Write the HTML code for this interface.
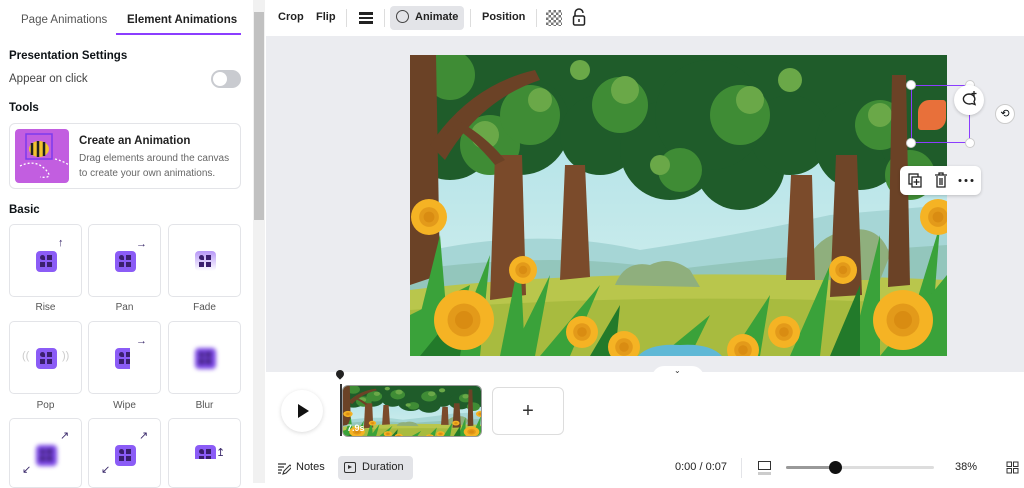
<!DOCTYPE html>
<html><head><meta charset="utf-8"><style>
*{box-sizing:border-box;margin:0;padding:0}
body{width:1024px;height:483px;overflow:hidden;font-family:"Liberation Sans",sans-serif;background:#fff;position:relative;color:#0d1216}
.a{position:absolute}
.tile{position:absolute;width:73px;height:73px;border:1px solid #e3e4e8;border-radius:5px;background:#fff;overflow:hidden}
.lab{position:absolute;width:73px;text-align:center;font-size:10px;color:#555}
.ic{position:absolute;left:26px;top:26px;width:21px;height:21px;background:#8b5cf6;border-radius:4px;overflow:hidden}
.ic::before{content:"";position:absolute;left:4px;top:4px;width:5px;height:5px;background:#3b1f6e;border-radius:50% 50% 0 50%}
.ic::after{content:"";position:absolute;left:4px;top:11px;width:5px;height:5px;background:#3b1f6e;box-shadow:7px 0 0 #3b1f6e,7px -7px 0 #3b1f6e}
.tb{font-size:11px;font-weight:bold;color:#222;position:absolute;top:11px}
</style></head><body>
<svg width="0" height="0" style="position:absolute">
<defs>
<linearGradient id="sky" x1="0" y1="0" x2="0" y2="1"><stop offset="0" stop-color="#a9dfe6"/><stop offset="1" stop-color="#d6f0ee"/></linearGradient>
<g id="fl"><circle r="1" fill="#f5b324"/><circle r=".55" fill="#e39a1a"/><circle r=".3" fill="#d98c12"/></g>
<symbol id="scene" viewBox="0 0 537 301" preserveAspectRatio="none">
<rect width="537" height="301" fill="url(#sky)"/>
<path d="M0 200 Q120 170 230 195 Q330 180 420 160 L537 150 L537 260 L0 260Z" fill="#a6d6d6"/>
<path d="M0 215 Q150 195 260 215 Q380 200 537 190 L537 260 L0 260Z" fill="#93c6bc"/>
<path d="M0 235 Q200 210 537 225 L537 301 L0 301Z" fill="#b9c64c"/>
<path d="M0 255 Q250 235 537 250 L537 301 L0 301Z" fill="#a8bb3f"/>
<path d="M205 230 Q215 205 240 210 Q260 200 280 215 L290 232Z" fill="#8faf7d"/>
<path d="M390 225 Q400 180 440 175 Q470 170 480 200 L470 225Z" fill="#8faf7d"/>
<g fill="#1f5c2a">
<rect x="0" y="0" width="537" height="70"/>
<circle cx="40" cy="80" r="45"/><circle cx="110" cy="70" r="50"/><circle cx="190" cy="80" r="40"/>
<circle cx="260" cy="95" r="50"/><circle cx="330" cy="110" r="45"/><circle cx="380" cy="80" r="40"/>
<circle cx="450" cy="90" r="45"/><circle cx="510" cy="85" r="40"/><circle cx="300" cy="60" r="55"/>
</g>
<g fill="#3f8c35">
<circle cx="80" cy="90" r="30"/><circle cx="120" cy="60" r="30"/><circle cx="210" cy="50" r="28"/>
<circle cx="330" cy="60" r="30"/><circle cx="270" cy="115" r="22"/><circle cx="470" cy="70" r="25"/>
<circle cx="500" cy="120" r="25"/><circle cx="40" cy="20" r="25"/>
</g>
<g fill="#6aa848">
<circle cx="75" cy="80" r="14"/><circle cx="130" cy="45" r="12"/><circle cx="215" cy="35" r="14"/>
<circle cx="340" cy="45" r="14"/><circle cx="250" cy="110" r="10"/><circle cx="470" cy="60" r="12"/>
<circle cx="380" cy="25" r="12"/><circle cx="170" cy="15" r="10"/>
</g>
<path d="M0 0 L26 0 L30 220 L0 230Z" fill="#6b4226"/>
<path d="M85 100 L112 100 L116 240 L80 245Z" fill="#7a4a2a"/>
<path d="M20 90 Q60 30 125 15 L130 25 Q70 45 35 105Z" fill="#6b4226"/>
<path d="M85 110 Q60 80 40 70 L45 64 Q75 80 95 105Z" fill="#6b4226"/>
<path d="M155 110 L175 110 L180 222 L150 225Z" fill="#7b4b2b"/>
<path d="M381 120 L402 120 L405 225 L376 225Z" fill="#7b4b2b"/>
<path d="M426 100 L447 100 L452 240 L420 242Z" fill="#6f4528"/>
<path d="M482 20 L496 20 L500 230 L478 232Z" fill="#6b4226"/>
<g fill="#3aa23a">
<path d="M0 301 L30 180 L40 301Z"/><path d="M40 301 L80 200 L70 301Z"/><path d="M100 301 L140 220 L125 301Z"/>
<path d="M130 301 L190 230 L160 301Z"/><path d="M320 301 L360 240 L350 301Z"/><path d="M380 301 L420 210 L410 301Z"/>
<path d="M440 301 L470 180 L470 301Z"/><path d="M490 301 L530 170 L520 301Z"/><path d="M0 260 L60 230 L40 301 L0 301Z"/>
<path d="M470 301 L537 220 L537 301Z"/><path d="M90 301 L110 200 L115 301Z"/><path d="M250 301 L300 260 L280 301Z"/>
</g>
<g fill="#227a2a"><path d="M10 301 L60 240 L50 301Z"/><path d="M420 301 L450 230 L450 301Z"/><path d="M180 301 L210 250 L205 301Z"/></g>
<path d="M228 301 Q240 288 270 290 Q300 288 312 301Z" fill="#5fb8d6"/>
<use href="#fl" transform="translate(54,265) scale(30)"/><use href="#fl" transform="translate(493,265) scale(30)"/>
<use href="#fl" transform="translate(19,162) scale(18)"/><use href="#fl" transform="translate(528,162) scale(18)"/>
<use href="#fl" transform="translate(172,277) scale(16)"/><use href="#fl" transform="translate(214,292) scale(16)"/>
<use href="#fl" transform="translate(374,277) scale(16)"/><use href="#fl" transform="translate(333,295) scale(16)"/>
<use href="#fl" transform="translate(113,215) scale(14)"/><use href="#fl" transform="translate(433,215) scale(14)"/>
</symbol>
</defs></svg>

<!-- left panel -->
<div class="a" style="left:21px;top:14px;font-size:11.5px;color:#555">Page Animations</div>
<div class="a" style="left:127px;top:14px;font-size:11.5px;font-weight:bold;color:#222">Element Animations</div>
<div class="a" style="left:116px;top:33px;width:125px;height:2px;background:#8b3dff"></div>
<div class="a" style="left:9px;top:50px;font-size:11.5px;font-weight:bold">Presentation Settings</div>
<div class="a" style="left:9px;top:73px;font-size:11.5px;color:#444">Appear on click</div>
<div class="a" style="left:211px;top:70px;width:30px;height:18px;border-radius:9px;background:#c9cbd0"><div class="a" style="left:2px;top:2px;width:14px;height:14px;border-radius:50%;background:#fff"></div></div>
<div class="a" style="left:9px;top:102px;font-size:11.5px;font-weight:bold">Tools</div>
<div class="a" style="left:9px;top:123px;width:232px;height:66px;border:1px solid #e3e4e8;border-radius:6px"></div>
<div class="a" style="left:15px;top:129px;width:54px;height:54px;border-radius:4px;background:#c25ee0">
<svg width="54" height="54"><rect x="11" y="5" width="26" height="25" fill="none" stroke="#7c3aed" stroke-width="1.5"/><ellipse cx="24" cy="20" rx="10" ry="8" fill="#f2c230"/><path d="M17 14v12M23 12v16M29 13v14" stroke="#222" stroke-width="2.5"/><path d="M5 37 Q20 30 30 40 Q40 50 25 48 M40 30 Q48 32 54 36" fill="none" stroke="#fff" stroke-width="1.3" stroke-dasharray="2 2"/></svg></div>
<div class="a" style="left:79px;top:135px;font-size:11.5px;font-weight:bold;color:#222">Create an Animation</div>
<div class="a" style="left:79px;top:151px;font-size:10px;color:#666;line-height:15px;width:160px">Drag elements around the canvas to create your own animations.</div>
<div class="a" style="left:9px;top:204px;font-size:11.5px;font-weight:bold">Basic</div>

<div class="tile" style="left:9px;top:224px"><div class="ic"></div><div class="a" style="left:48px;top:12px;font-size:11px;color:#3b2a6b">↑</div></div>
<div class="tile" style="left:88px;top:224px"><div class="ic"></div><div class="a" style="left:47px;top:13px;font-size:11px;color:#3b2a6b">→</div></div>
<div class="tile" style="left:168px;top:224px"><div class="ic" style="background:linear-gradient(#b797f7,#fff);height:20px"></div></div>
<div class="lab" style="left:9px;top:302px">Rise</div><div class="lab" style="left:88px;top:302px">Pan</div><div class="lab" style="left:168px;top:302px">Fade</div>
<div class="tile" style="left:9px;top:321px"><div class="ic"></div><div class="a" style="left:12px;top:28px;font-size:11px;color:#ccc">((</div><div class="a" style="left:52px;top:28px;font-size:11px;color:#ccc">))</div></div>
<div class="tile" style="left:88px;top:321px"><div class="ic" style="width:15px;border-radius:4px 0 0 4px"></div><div class="a" style="left:47px;top:13px;font-size:11px;color:#3b2a6b">→</div></div>
<div class="tile" style="left:168px;top:321px"><div class="ic" style="filter:blur(2px);background:#7a45e6"></div></div>
<div class="lab" style="left:9px;top:400px">Pop</div><div class="lab" style="left:88px;top:400px">Wipe</div><div class="lab" style="left:168px;top:400px">Blur</div>
<div class="tile" style="left:9px;top:418px;height:70px"><div class="ic" style="filter:blur(2px);background:#7a45e6"></div><div class="a" style="left:50px;top:10px;font-size:11px;color:#3b2a6b">↗</div><div class="a" style="left:12px;top:44px;font-size:11px;color:#3b2a6b">↙</div></div>
<div class="tile" style="left:88px;top:418px;height:70px"><div class="ic"></div><div class="a" style="left:50px;top:10px;font-size:11px;color:#3b2a6b">↗</div><div class="a" style="left:12px;top:44px;font-size:11px;color:#3b2a6b">↙</div></div>
<div class="tile" style="left:168px;top:418px;height:70px"><div class="ic" style="height:14px;top:26px;border-radius:4px 4px 0 0"></div><div class="a" style="left:47px;top:27px;font-size:11px;color:#3b2a6b">↥</div></div>
<div class="a" style="left:253px;top:0;width:12px;height:483px;background:#f1f1f1"></div>
<div class="a" style="left:254px;top:12px;width:10px;height:208px;background:#c1c1c1"></div>

<!-- toolbar -->
<div class="a" style="left:266px;top:36px;width:758px;height:336px;background:#ebecf0"></div>
<div class="tb" style="left:278px">Crop</div><div class="tb" style="left:316px">Flip</div>
<div class="a" style="left:346px;top:9px;width:1px;height:18px;background:#ddd"></div>
<div class="a" style="left:359px;top:12px;width:14px;height:3px;background:#222"></div><div class="a" style="left:359px;top:17px;width:14px;height:2px;background:#222"></div><div class="a" style="left:359px;top:21px;width:14px;height:3px;background:#222"></div>
<div class="a" style="left:384px;top:9px;width:1px;height:18px;background:#ddd"></div>
<div class="a" style="left:390px;top:6px;width:74px;height:24px;border-radius:4px;background:#e3e4e8"></div>
<div class="a" style="left:396px;top:10px;width:13px;height:13px;border:1.5px solid #444;border-radius:50%"></div>
<div class="tb" style="left:415px">Animate</div>
<div class="a" style="left:470px;top:9px;width:1px;height:18px;background:#ddd"></div>
<div class="tb" style="left:482px">Position</div>
<div class="a" style="left:536px;top:9px;width:1px;height:18px;background:#ddd"></div>
<div class="a" style="left:546px;top:10px;width:16px;height:16px;background:repeating-conic-gradient(#555 0 25%,#fff 0 50%) 0 0/5px 5px;opacity:.8"></div>
<svg class="a" style="left:571px;top:8px" width="16" height="18"><path d="M4 8V5a4 4 0 0 1 8 0" fill="none" stroke="#222" stroke-width="1.5"/><rect x="2.5" y="8" width="11" height="9" rx="1.5" fill="none" stroke="#222" stroke-width="1.5"/><path d="M8 11v3" stroke="#222" stroke-width="1.5"/></svg>

<!-- canvas -->
<svg class="a" style="left:410px;top:55px" width="537" height="301"><use href="#scene" width="537" height="301"/></svg>
<div class="a" style="left:911px;top:85px;width:59px;height:58px;border:1.5px solid #8b3dff"></div>
<div class="a" style="left:918px;top:100px;width:28px;height:30px;background:#e8703a;border-radius:40% 10% 40% 10%"></div>
<div class="a" style="left:906px;top:80px;width:10px;height:10px;border-radius:50%;background:#fff;border:1px solid #ccc"></div>
<div class="a" style="left:965px;top:80px;width:10px;height:10px;border-radius:50%;background:#fff;border:1px solid #ccc"></div>
<div class="a" style="left:906px;top:138px;width:10px;height:10px;border-radius:50%;background:#fff;border:1px solid #ccc"></div>
<div class="a" style="left:965px;top:138px;width:10px;height:10px;border-radius:50%;background:#fff;border:1px solid #ccc"></div>
<div class="a" style="left:954px;top:85px;width:30px;height:30px;border-radius:50%;background:#fff;box-shadow:0 1px 3px rgba(0,0,0,.2)"><svg width="30" height="30"><path d="M15 9a6 5 0 1 0 3 9.5l3 1-1-3A6 5 0 0 0 15 9" fill="none" stroke="#222" stroke-width="1.4"/><path d="M20 6v5M17.5 8.5h5" stroke="#222" stroke-width="1.3"/></svg></div>
<div class="a" style="left:995px;top:104px;width:20px;height:20px;border-radius:50%;background:#fff;border:1px solid #ccc;font-size:11px;text-align:center;line-height:18px">⟲</div>
<div class="a" style="left:900px;top:166px;width:81px;height:29px;border-radius:6px;background:#fff;box-shadow:0 1px 3px rgba(0,0,0,.2)">
<svg width="81" height="29"><rect x="9" y="8" width="9" height="10" fill="none" stroke="#222" stroke-width="1.3"/><rect x="12" y="11" width="9" height="10" fill="#fff" stroke="#222" stroke-width="1.3"/><path d="M16.5 13v6M13.5 16h6" stroke="#222" stroke-width="1.2"/><path d="M35 9h12M39 9V7h4v2M37 10v11h8V10M40 12v7M42 12v7" fill="none" stroke="#222" stroke-width="1.3"/><circle cx="60" cy="14.5" r="1.5" fill="#222"/><circle cx="66" cy="14.5" r="1.5" fill="#222"/><circle cx="72" cy="14.5" r="1.5" fill="#222"/></svg></div>

<!-- timeline -->
<div class="a" style="left:652px;top:366px;width:52px;height:12px;border-radius:12px 12px 0 0;background:#fff"></div>
<div class="a" style="left:674px;top:366px;font-size:8px;color:#333">⌄</div>
<div class="a" style="left:336px;top:370px;width:8px;height:8px;background:#222;border-radius:50% 50% 50% 0;transform:rotate(-45deg)"></div>
<div class="a" style="left:281px;top:390px;width:42px;height:42px;border-radius:50%;background:#fff;box-shadow:0 1px 4px rgba(0,0,0,.15)"><div class="a" style="left:17px;top:14px;border-left:11px solid #111;border-top:7px solid transparent;border-bottom:7px solid transparent"></div></div>
<div class="a" style="left:340px;top:384px;width:2px;height:52px;background:#333"></div>
<div class="a" style="left:342px;top:385px;width:140px;height:52px;border-radius:6px;border:1.5px solid #999;overflow:hidden"><svg width="140" height="52" style="display:block"><use href="#scene" width="140" height="52"/></svg><div class="a" style="left:4px;top:37px;font-size:9px;font-weight:bold;color:#fff">7.9s</div></div>
<div class="a" style="left:492px;top:387px;width:72px;height:48px;border-radius:6px;border:1px solid #ddd;text-align:center;line-height:46px;font-size:20px;color:#333;font-weight:300">+</div>

<svg class="a" style="left:277px;top:461px" width="14" height="14"><path d="M1 3h8M1 6h6M1 9h4M1 12h3" stroke="#333" stroke-width="1.2"/><path d="M6 13l1-3 6-6 2 2-6 6z" fill="none" stroke="#333" stroke-width="1.1"/></svg>
<div class="a" style="left:296px;top:461px;font-size:11px;color:#222">Notes</div>
<div class="a" style="left:338px;top:456px;width:75px;height:24px;border-radius:4px;background:#e3e4e8"></div>
<div class="a" style="left:344px;top:462px;width:12px;height:11px;border:1.3px solid #333;border-radius:2px"><div class="a" style="left:3px;top:2px;border-left:4px solid #333;border-top:2.5px solid transparent;border-bottom:2.5px solid transparent"></div></div>
<div class="a" style="left:362px;top:461px;font-size:11px;color:#222">Duration</div>
<div class="a" style="left:675px;top:461px;font-size:11px;color:#222">0:00 / 0:07</div>
<div class="a" style="left:741px;top:458px;width:1px;height:20px;background:#e3e4e8"></div>
<div class="a" style="left:758px;top:461px;width:13px;height:9px;border:1.3px solid #333"></div>
<div class="a" style="left:758px;top:472px;width:13px;height:3px;background:#ccc"></div>
<div class="a" style="left:786px;top:466px;width:148px;height:3px;background:#ddd;border-radius:2px"></div>
<div class="a" style="left:786px;top:466px;width:50px;height:3px;background:#999;border-radius:2px"></div>
<div class="a" style="left:829px;top:461px;width:13px;height:13px;border-radius:50%;background:#111"></div>
<div class="a" style="left:955px;top:461px;font-size:11px;color:#222">38%</div>
<svg class="a" style="left:1006px;top:461px" width="13" height="13"><rect x="1" y="1" width="4.5" height="4.5" fill="none" stroke="#333"/><rect x="7.5" y="1" width="4.5" height="4.5" fill="none" stroke="#333"/><rect x="1" y="7.5" width="4.5" height="4.5" fill="none" stroke="#333"/><rect x="7.5" y="7.5" width="4.5" height="4.5" fill="none" stroke="#333"/></svg>
</body></html>
